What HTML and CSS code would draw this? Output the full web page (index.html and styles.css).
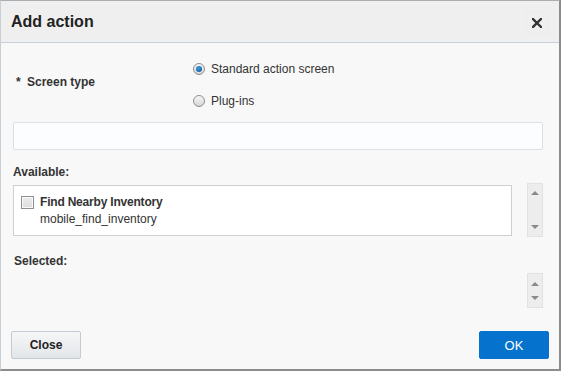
FILE: index.html
```html
<!DOCTYPE html>
<html lang="en">
  <head>
    <meta charset="UTF-8" />
    <title>Add action</title>
    <link rel="stylesheet" href="styles.css">
  </head>
  <body>
    <div class="dialog">
      <div class="dialog-header">
        <h1>Add action</h1>
        <span class="close-x">
          <svg width="10" height="10" viewBox="0 0 10 10">
            <path d="M1 1 L9 9 M9 1 L1 9" stroke="#333" stroke-width="2.4" stroke-linecap="square" />
          </svg>
        </span>
      </div>

      <div class="dialog-body">
        <div class="field-row">
          <div class="field-label"><span class="req">*</span> Screen type</div>
          <div class="radio-list">
            <label class="radio-item">
              <span class="radio checked"></span>Standard action screen
            </label>
            <label class="radio-item">
              <span class="radio"></span>Plug-ins
            </label>
          </div>
        </div>

        <div class="text-box"></div>

        <div class="section-label">Available:</div>
        <div class="list-row">
          <div class="list-box">
            <div class="list-item">
              <span class="checkbox"></span>
              <div>
                <div class="item-title">Find Nearby Inventory</div>
                <div class="item-sub">mobile_find_inventory</div>
              </div>
            </div>
          </div>
          <div class="scroller tall">
            <span class="arrow up"></span>
            <span class="arrow down"></span>
          </div>
        </div>

        <div class="section-label selected-label">Selected:</div>
        <div class="list-row end">
          <div class="scroller short">
            <span class="arrow up"></span>
            <span class="arrow down"></span>
          </div>
        </div>
      </div>

      <div class="dialog-footer">
        <button class="btn">Close</button>
        <button class="btn primary">OK</button>
      </div>
    </div>
  </body>
</html>
```

FILE: styles.css
```css
* {
  margin: 0;
  padding: 0;
  box-sizing: border-box;
}

body {
  font-family: "Liberation Sans", Arial, sans-serif;
  font-size: 12px;
  color: #333;
  background-color: #f8f8f8;
}

.dialog {
  width: 561px;
  height: 371px;
  display: flex;
  flex-direction: column;
  background-color: #f8f8f8;
  border-top: 1px solid #a9adb1;
  border-left: 1px solid #c6d0d9;
  border-right: 2px solid #8c8c8c;
  border-bottom: 2px solid #8c8c8c;
}

.dialog-header {
  height: 42px;
  display: flex;
  justify-content: space-between;
  align-items: center;
  padding: 0 11px 0 10px;
  background-color: #efefef;
  border-bottom: 1px solid #c5d0da;
}

.dialog-header h1 {
  font-size: 16px;
  font-weight: bold;
  color: #222;
}

.close-x {
  width: 22px;
  height: 22px;
  display: flex;
  justify-content: center;
  align-items: center;
  border: 1px solid #ebebeb;
  margin-top: 2px;
}

.dialog-body {
  padding: 0 16px 0 12px;
}

.field-row {
  display: flex;
  align-items: center;
  margin-top: 16px;
}

.field-label {
  width: 180px;
  padding: 0 0 6px 3px;
  font-weight: bold;
}

.req {
  margin-right: 3px;
}

.radio-list {
  display: flex;
  flex-direction: column;
  gap: 12px;
}

.radio-item {
  height: 20px;
  display: flex;
  align-items: center;
  gap: 6px;
}

.radio {
  width: 12px;
  height: 12px;
  border-radius: 50%;
  border: 1px solid #8f8f8f;
  background: linear-gradient(#f6f6f6, #d6d6d6);
  display: flex;
  justify-content: center;
  align-items: center;
}

.radio.checked::after {
  content: "";
  width: 6px;
  height: 6px;
  border-radius: 50%;
  background: radial-gradient(circle at 40% 35%, #3f9be0, #0a4f8c);
}

.text-box {
  height: 28px;
  margin-top: 11px;
  background-color: #fcfdfe;
  border: 1px solid #dce0e4;
  border-radius: 2px;
}

.section-label {
  margin-top: 15px;
  line-height: 14px;
  font-weight: bold;
}

.selected-label {
  margin-top: 17px;
  padding-left: 1px;
}

.list-row {
  display: flex;
  align-items: center;
  gap: 15px;
  margin-top: 4px;
}

.list-row.end {
  justify-content: flex-end;
  margin-top: 5px;
}

.list-box {
  flex: 1;
  height: 51px;
  background-color: #fff;
  border: 1px solid #cfcfcf;
}

.list-item {
  display: flex;
  gap: 6px;
  padding: 9px 7px;
}

.checkbox {
  width: 13px;
  height: 13px;
  margin-top: 1px;
  border: 1px solid #8f8f8f;
  background: linear-gradient(#ececec, #dcdcdc);
  box-shadow: inset 0 0 0 1px #fafafa;
}

.item-title {
  font-weight: bold;
  line-height: 14px;
  letter-spacing: -0.2px;
}

.item-sub {
  margin-top: 3px;
  line-height: 14px;
}

.scroller {
  width: 16px;
  display: flex;
  flex-direction: column;
  justify-content: space-between;
  align-items: center;
  background-color: #ededed;
  border: 1px solid #e2e2e2;
}

.scroller.tall {
  height: 54px;
  padding: 7px 0 7px;
}

.scroller.short {
  height: 35px;
  padding: 8px 0 7px;
}

.arrow {
  width: 0;
  height: 0;
  border-left: 4px solid transparent;
  border-right: 4px solid transparent;
}

.arrow.up {
  border-bottom: 4px solid #8a8a8a;
}

.arrow.down {
  border-top: 4px solid #8a8a8a;
}

.dialog-footer {
  display: flex;
  justify-content: space-between;
  padding: 0 10px 0 10px;
  margin-top: 23px;
}

.btn {
  width: 70px;
  height: 28px;
  font-family: "Liberation Sans", Arial, sans-serif;
  font-size: 12px;
  font-weight: bold;
  color: #222;
  background: linear-gradient(#f5f6f7, #e3e6e9);
  border: 1px solid #c3cad1;
  border-radius: 2px;
}

.btn.primary {
  background: #0572ce;
  border-color: #0572ce;
  color: #fff;
  font-size: 13px;
  font-weight: normal;
}
```
